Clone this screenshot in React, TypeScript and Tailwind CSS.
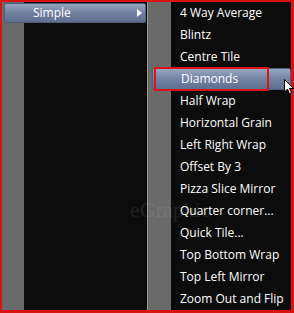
const filters = [
  "4 Way Average",
  "Blintz",
  "Centre Tile",
  "Diamonds",
  "Half Wrap",
  "Horizontal Grain",
  "Left Right Wrap",
  "Offset By 3",
  "Pizza Slice Mirror",
  "Quarter corner...",
  "Quick Tile...",
  "Top Bottom Wrap",
  "Top Left Mirror",
  "Zoom Out and Flip",
];

const App = () => {
  return (
    <div
      className="relative w-[294px] h-[313px] bg-[#d81414] pl-[2px] pt-[2px] pr-[3px] pb-[3px] flex overflow-hidden text-white text-[12px]"
      style={{ fontFamily: '"Open Sans", "Noto Sans", sans-serif' }}
    >
      {/* parent menu */}
      <div className="w-[145px] h-full flex flex-col bg-[linear-gradient(to_right,#6a6a6a_22px,#0c0c0c_22px)]">
        <div className="mt-[1px] ml-[2px] mr-[1px] h-[20px] flex items-center pl-[28px] pr-[3px] bg-[linear-gradient(to_bottom,#96a6c0,#6f80a0_50%,#5e6f90)] border border-[#4e5d7a] rounded-[2px]">
          <span className="flex-1 leading-none">Simple</span>
          <svg width="5" height="8" viewBox="0 0 5 8">
            <path d="M0 0 L5 4 L0 8 Z" fill="#fff" />
          </svg>
        </div>
      </div>

      {/* submenu */}
      <div className="w-[144px] h-full flex flex-col border-l border-[#9a9a9a] bg-[linear-gradient(to_right,#6a6a6a_23px,#0c0c0c_23px)]">
        {filters.map((name) =>
          name === "Diamonds" ? (
            <div key={name} className="relative h-[22px] ml-[4px] flex items-center pl-[28px] bg-[linear-gradient(to_bottom,#96a6c0,#7284a4_50%,#5e6f90)] border border-[#4e5d7a] rounded-[2px]">
              <span className="leading-none">{name}</span>
              <div className="absolute left-[1px] top-[-2px] w-[115px] h-[24px] border-2 border-[#d81414]" />
            </div>
          ) : (
            <div key={name} className="h-[22px] flex items-center pl-[32px]">
              <span className="leading-none">{name}</span>
            </div>
          )
        )}
      </div>

      {/* watermark */}
      <div className="absolute left-[130px] top-[193px] text-[22px] text-white opacity-[0.08] pointer-events-none" style={{ fontFamily: '"Liberation Serif", serif' }}>
        eGraphic
      </div>

      {/* mouse cursor */}
      <svg className="absolute left-[284px] top-[79px]" width="10" height="16" viewBox="0 0 10 16">
        <path d="M0.5 0.5 L0.5 13 L3.5 10 L5.5 15 L7.5 14 L5.5 9.5 L9.5 9.5 Z" fill="#fff" stroke="#000" strokeWidth="1" />
      </svg>
    </div>
  );
};

export default App;
